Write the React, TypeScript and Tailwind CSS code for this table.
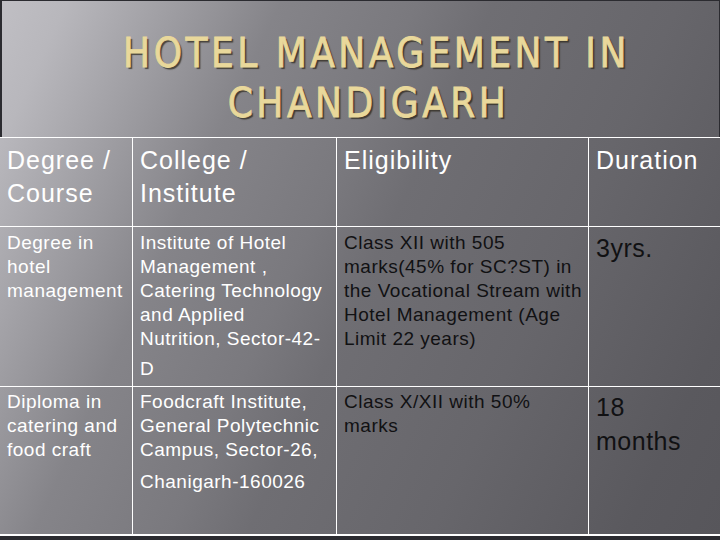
import React from 'react';

type Cell = {
  lines: string[];
  tail?: string;
  tone: 'white' | 'black';
  big?: boolean;
};

const header = [['Degree /', 'Course'], ['College /', 'Institute'], ['Eligibility'], ['Duration']];

const rows: Cell[][] = [
  [
    { lines: ['Degree in', 'hotel', 'management'], tone: 'white' },
    {
      lines: ['Institute of Hotel', 'Management ,', 'Catering Technology', 'and Applied', 'Nutrition, Sector-42-'],
      tail: 'D',
      tone: 'white',
    },
    {
      lines: ['Class XII with 505', 'marks(45% for SC?ST) in', 'the Vocational Stream with', 'Hotel Management (Age', 'Limit 22 years)'],
      tone: 'black',
    },
    { lines: ['3yrs.'], tone: 'black', big: true },
  ],
  [
    { lines: ['Diploma in', 'catering and', 'food craft'], tone: 'white' },
    {
      lines: ['Foodcraft Institute,', 'General Polytechnic', 'Campus, Sector-26,'],
      tail: 'Chanigarh-160026',
      tone: 'white',
    },
    { lines: ['Class X/XII with 50%', 'marks'], tone: 'black' },
    { lines: ['18', 'months'], tone: 'black', big: true },
  ],
];

const sans = "font-['Liberation_Sans',Arial,sans-serif]";

export default function App() {
  return (
    <div
      className={`w-[720px] h-[540px] flex flex-col overflow-hidden bg-[linear-gradient(115deg,#c0bfc4_0%,#b8b7bc_7%,#9a999e_20%,#858489_29%,#7a797e_43%,#6f6e73_51%,#67666b_70%,#5a595e_90%,#57565b_100%)] ${sans}`}
    >
      {/* title */}
      <div className="h-[137px] border-t border-l-2 border-r border-[#2b2b30] pt-[27px]">
        <h1 className="font-['DejaVu_Sans',sans-serif] font-stretch-condensed text-[40px] leading-[50px] text-[#e9d89b] [-webkit-text-stroke:0.8px_#e9d89b] [text-shadow:2px_2px_1px_rgba(45,40,30,0.75)] tracking-[3.5px]">
          <span className="block text-center pl-[32px] whitespace-nowrap">HOTEL MANAGEMENT IN</span>
          <span className="block text-center pl-[16px] whitespace-nowrap">CHANDIGARH</span>
        </h1>
      </div>

      {/* table */}
      <div className="grid grid-cols-[133px_204px_252px_131px] grid-rows-[89px_160px_149px] border-t border-white">
        {header.map((h, i) => (
          <div
            key={i}
            className={`border-b border-white ${i < 3 ? 'border-r' : ''} pt-[6px] px-[7px] text-[25px] leading-[33px] tracking-[1px] text-white whitespace-nowrap`}
          >
            {h.map((l) => (
              <div key={l}>{l}</div>
            ))}
          </div>
        ))}
        {rows.map((row, r) =>
          row.map((c, i) => (
            <div
              key={`${r}-${i}`}
              className={`${r === 1 ? 'border-b-2 pt-[3px]' : 'border-b pt-[4px]'} border-white ${i < 3 ? 'border-r' : ''} px-[7px] whitespace-nowrap ${
                c.tone === 'white' ? 'text-white' : 'text-[#111113]'
              } ${c.big ? 'text-[25px] leading-[34px] tracking-[0.5px] pt-[3px]' : 'text-[19px] leading-[24px] tracking-[0.5px]'}`}
            >
              {c.lines.map((l) => (
                <div key={l}>{l}</div>
              ))}
              {c.tail && <div className={r === 0 ? 'mt-[6px]' : 'mt-[8px]'}>{c.tail}</div>}
            </div>
          ))
        )}
      </div>

      <div className="flex-1 bg-[#2b2b30]" />
    </div>
  );
}
